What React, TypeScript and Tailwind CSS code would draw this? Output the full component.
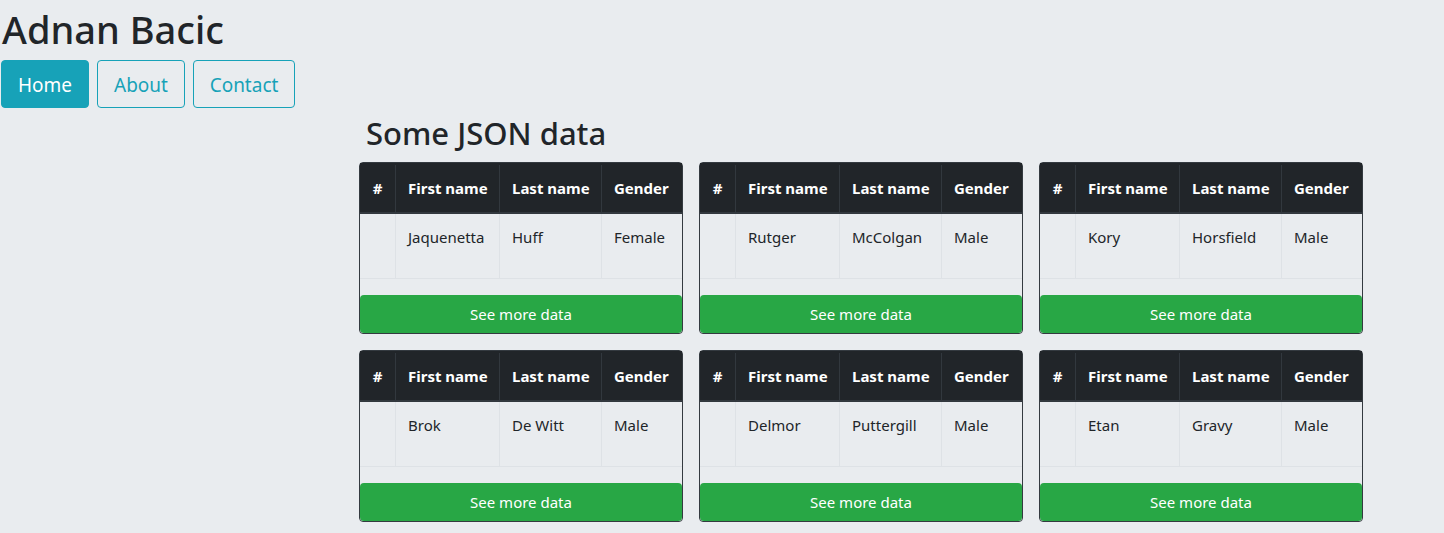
const people = [
  { first: "Jaquenetta", last: "Huff", gender: "Female" },
  { first: "Rutger", last: "McColgan", gender: "Male" },
  { first: "Kory", last: "Horsfield", gender: "Male" },
  { first: "Brok", last: "De Witt", gender: "Male" },
  { first: "Delmor", last: "Puttergill", gender: "Male" },
  { first: "Etan", last: "Gravy", gender: "Male" },
];

function PersonCard({ first, last, gender }: { first: string; last: string; gender: string }) {
  return (
    <div className="flex h-[172px] flex-col rounded-[4px] border border-[#343a40]">
      <div className="grid h-[51px] grid-cols-[36px_104px_102px_1fr] border-b-2 border-[#32383e] bg-[#212529] pt-[2px] text-[15px] font-bold text-white">
        <div className="flex items-center justify-center border-r border-[#32383e]">#</div>
        <div className="flex items-center border-r border-[#32383e] pl-3">First name</div>
        <div className="flex items-center border-r border-[#32383e] pl-3">Last name</div>
        <div className="flex items-center pl-3">Gender</div>
      </div>
      <div className="grid h-[65px] grid-cols-[36px_104px_102px_1fr] border-b border-[#dee2e6] text-[15px] text-[#212529]">
        <div className="border-r border-[#dee2e6]" />
        <div className="border-r border-[#dee2e6] pl-3 pt-3">{first}</div>
        <div className="border-r border-[#dee2e6] pl-3 pt-3">{last}</div>
        <div className="pl-3 pt-3">{gender}</div>
      </div>
      <button
        type="button"
        className="mt-auto h-[38px] w-full rounded-[4px] bg-[#28a745] pt-[1px] text-[15px] text-white"
      >
        See more data
      </button>
    </div>
  );
}

export default function App() {
  return (
    <div
      className="min-h-[533px] bg-[#e9ecef] text-[#212529]"
      style={{ fontFamily: '"Noto Sans", "Open Sans", sans-serif' }}
    >
      <h1 className="pl-[2px] pt-[6px] text-[38px] font-medium leading-[46px]">Adnan Bacic</h1>
      <nav className="mt-[8px] flex gap-2 pl-[1px]">
        <button type="button" className="h-[48px] w-[88px] rounded-[4px] border border-[#17a2b8] bg-[#17a2b8] pt-[2px] text-[19px] text-white">
          Home
        </button>
        <button type="button" className="h-[48px] w-[88px] rounded-[4px] border border-[#17a2b8] pt-[2px] text-[19px] text-[#17a2b8]">
          About
        </button>
        <button type="button" className="h-[48px] w-[102px] rounded-[4px] border border-[#17a2b8] pt-[2px] text-[19px] text-[#17a2b8]">
          Contact
        </button>
      </nav>
      <main className="ml-[359px] w-[1004px]">
        <h2 className="mt-[3px] pl-[7px] text-[31px] font-medium leading-[44px]">Some JSON data</h2>
        <div className="mt-[7px] grid grid-cols-3 gap-4">
          {people.map((p) => (
            <PersonCard key={p.first} {...p} />
          ))}
        </div>
      </main>
    </div>
  );
}
